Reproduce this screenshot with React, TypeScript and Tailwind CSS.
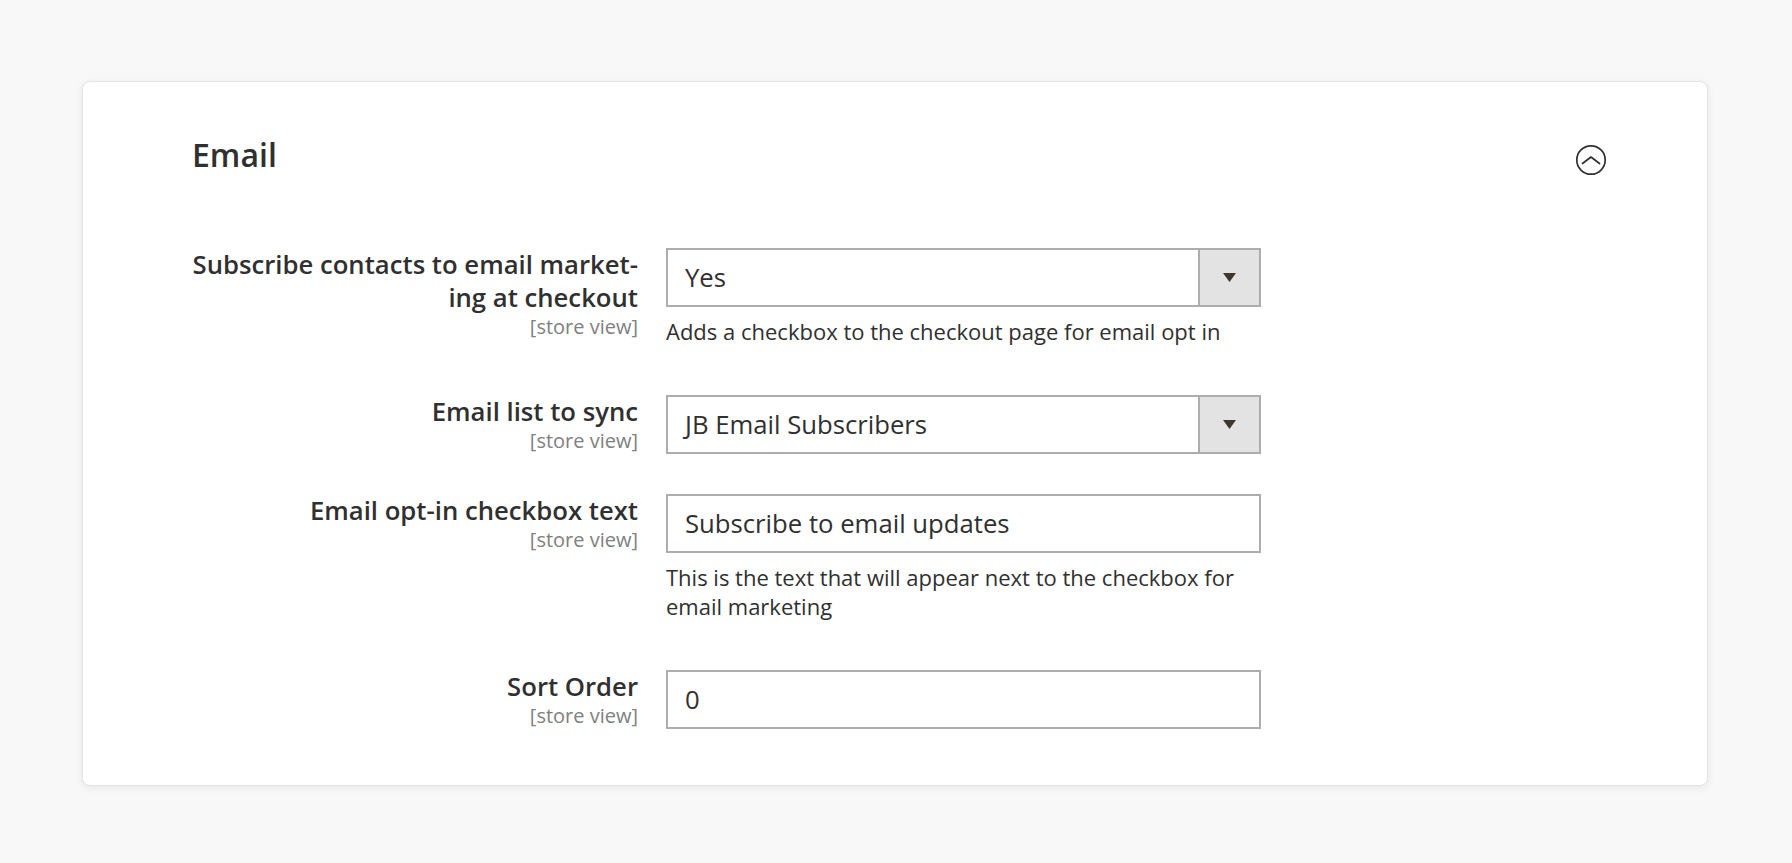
import React from "react";

type Row = {
  label: React.ReactNode;
  kind: "select" | "text";
  value: string;
  note?: string;
  gap: string;
};

const rows: Row[] = [
  {
    label: (
      <>
        Subscribe contacts to email market-
        <br />
        ing at checkout
      </>
    ),
    kind: "select",
    value: "Yes",
    note: "Adds a checkbox to the checkout page for email opt in",
    gap: "mt-[72px]",
  },
  { label: "Email list to sync", kind: "select", value: "JB Email Subscribers", gap: "mt-[49px]" },
  {
    label: "Email opt-in checkbox text",
    kind: "text",
    value: "Subscribe to email updates",
    note: "This is the text that will appear next to the checkbox for email marketing",
    gap: "mt-[40px]",
  },
  { label: "Sort Order", kind: "text", value: "0", gap: "mt-[49px]" },
];

function CollapseIcon() {
  return (
    <svg width="32" height="32" viewBox="0 0 32 32" fill="none" stroke="#303030" strokeWidth="1.7">
      <circle cx="16" cy="16" r="14.2" />
      <polyline points="7.5,19.5 16,13 24.5,19.5" strokeLinecap="round" strokeLinejoin="round" />
    </svg>
  );
}

function Field({ row }: { row: Row }) {
  return (
    <div className={`flex gap-[28px] ${row.gap}`}>
      <div className="w-[446px] whitespace-nowrap text-right">
        <div className="text-[25.7px] font-semibold leading-[33px] text-[#303030]">{row.label}</div>
        <div className="text-[20px] leading-[26px] text-[#808080]">[store view]</div>
      </div>
      <div className="w-[595px]">
        <div className="flex h-[59px] border-2 border-[#adadad] bg-white">
          <div className="flex flex-1 items-center px-[17px] pt-[2px] text-[25.7px] text-[#303030]">{row.value}</div>
          {row.kind === "select" && (
            <div className="flex w-[61px] items-center justify-center border-l-2 border-[#adadad] bg-[#e3e3e3]">
              <svg width="13" height="9" viewBox="0 0 13 9">
                <polygon points="0,0 13,0 6.5,9" fill="#41362f" />
              </svg>
            </div>
          )}
        </div>
        {row.note && (
          <p className="mt-[10px] text-[22px] leading-[29px] text-[#303030]">{row.note}</p>
        )}
      </div>
    </div>
  );
}

export default function App() {
  return (
    <div className="min-h-screen bg-[#f8f8f8] pl-[82px] pr-[84px] pt-[81px] font-['Open_Sans',sans-serif]">
      <section className="rounded-lg border border-[#e3e3e3] bg-white pb-[56px] pl-[109px] pr-[100px] pt-[52px] shadow-[0_2px_8px_rgba(0,0,0,0.07)]">
        <div className="flex items-start justify-between">
          <h2 className="text-[32px] font-semibold leading-[41px] text-[#303030]">Email</h2>
          <button className="mt-[10px]" aria-label="Collapse">
            <CollapseIcon />
          </button>
        </div>
        {rows.map((r, i) => (
          <Field key={i} row={r} />
        ))}
      </section>
    </div>
  );
}
